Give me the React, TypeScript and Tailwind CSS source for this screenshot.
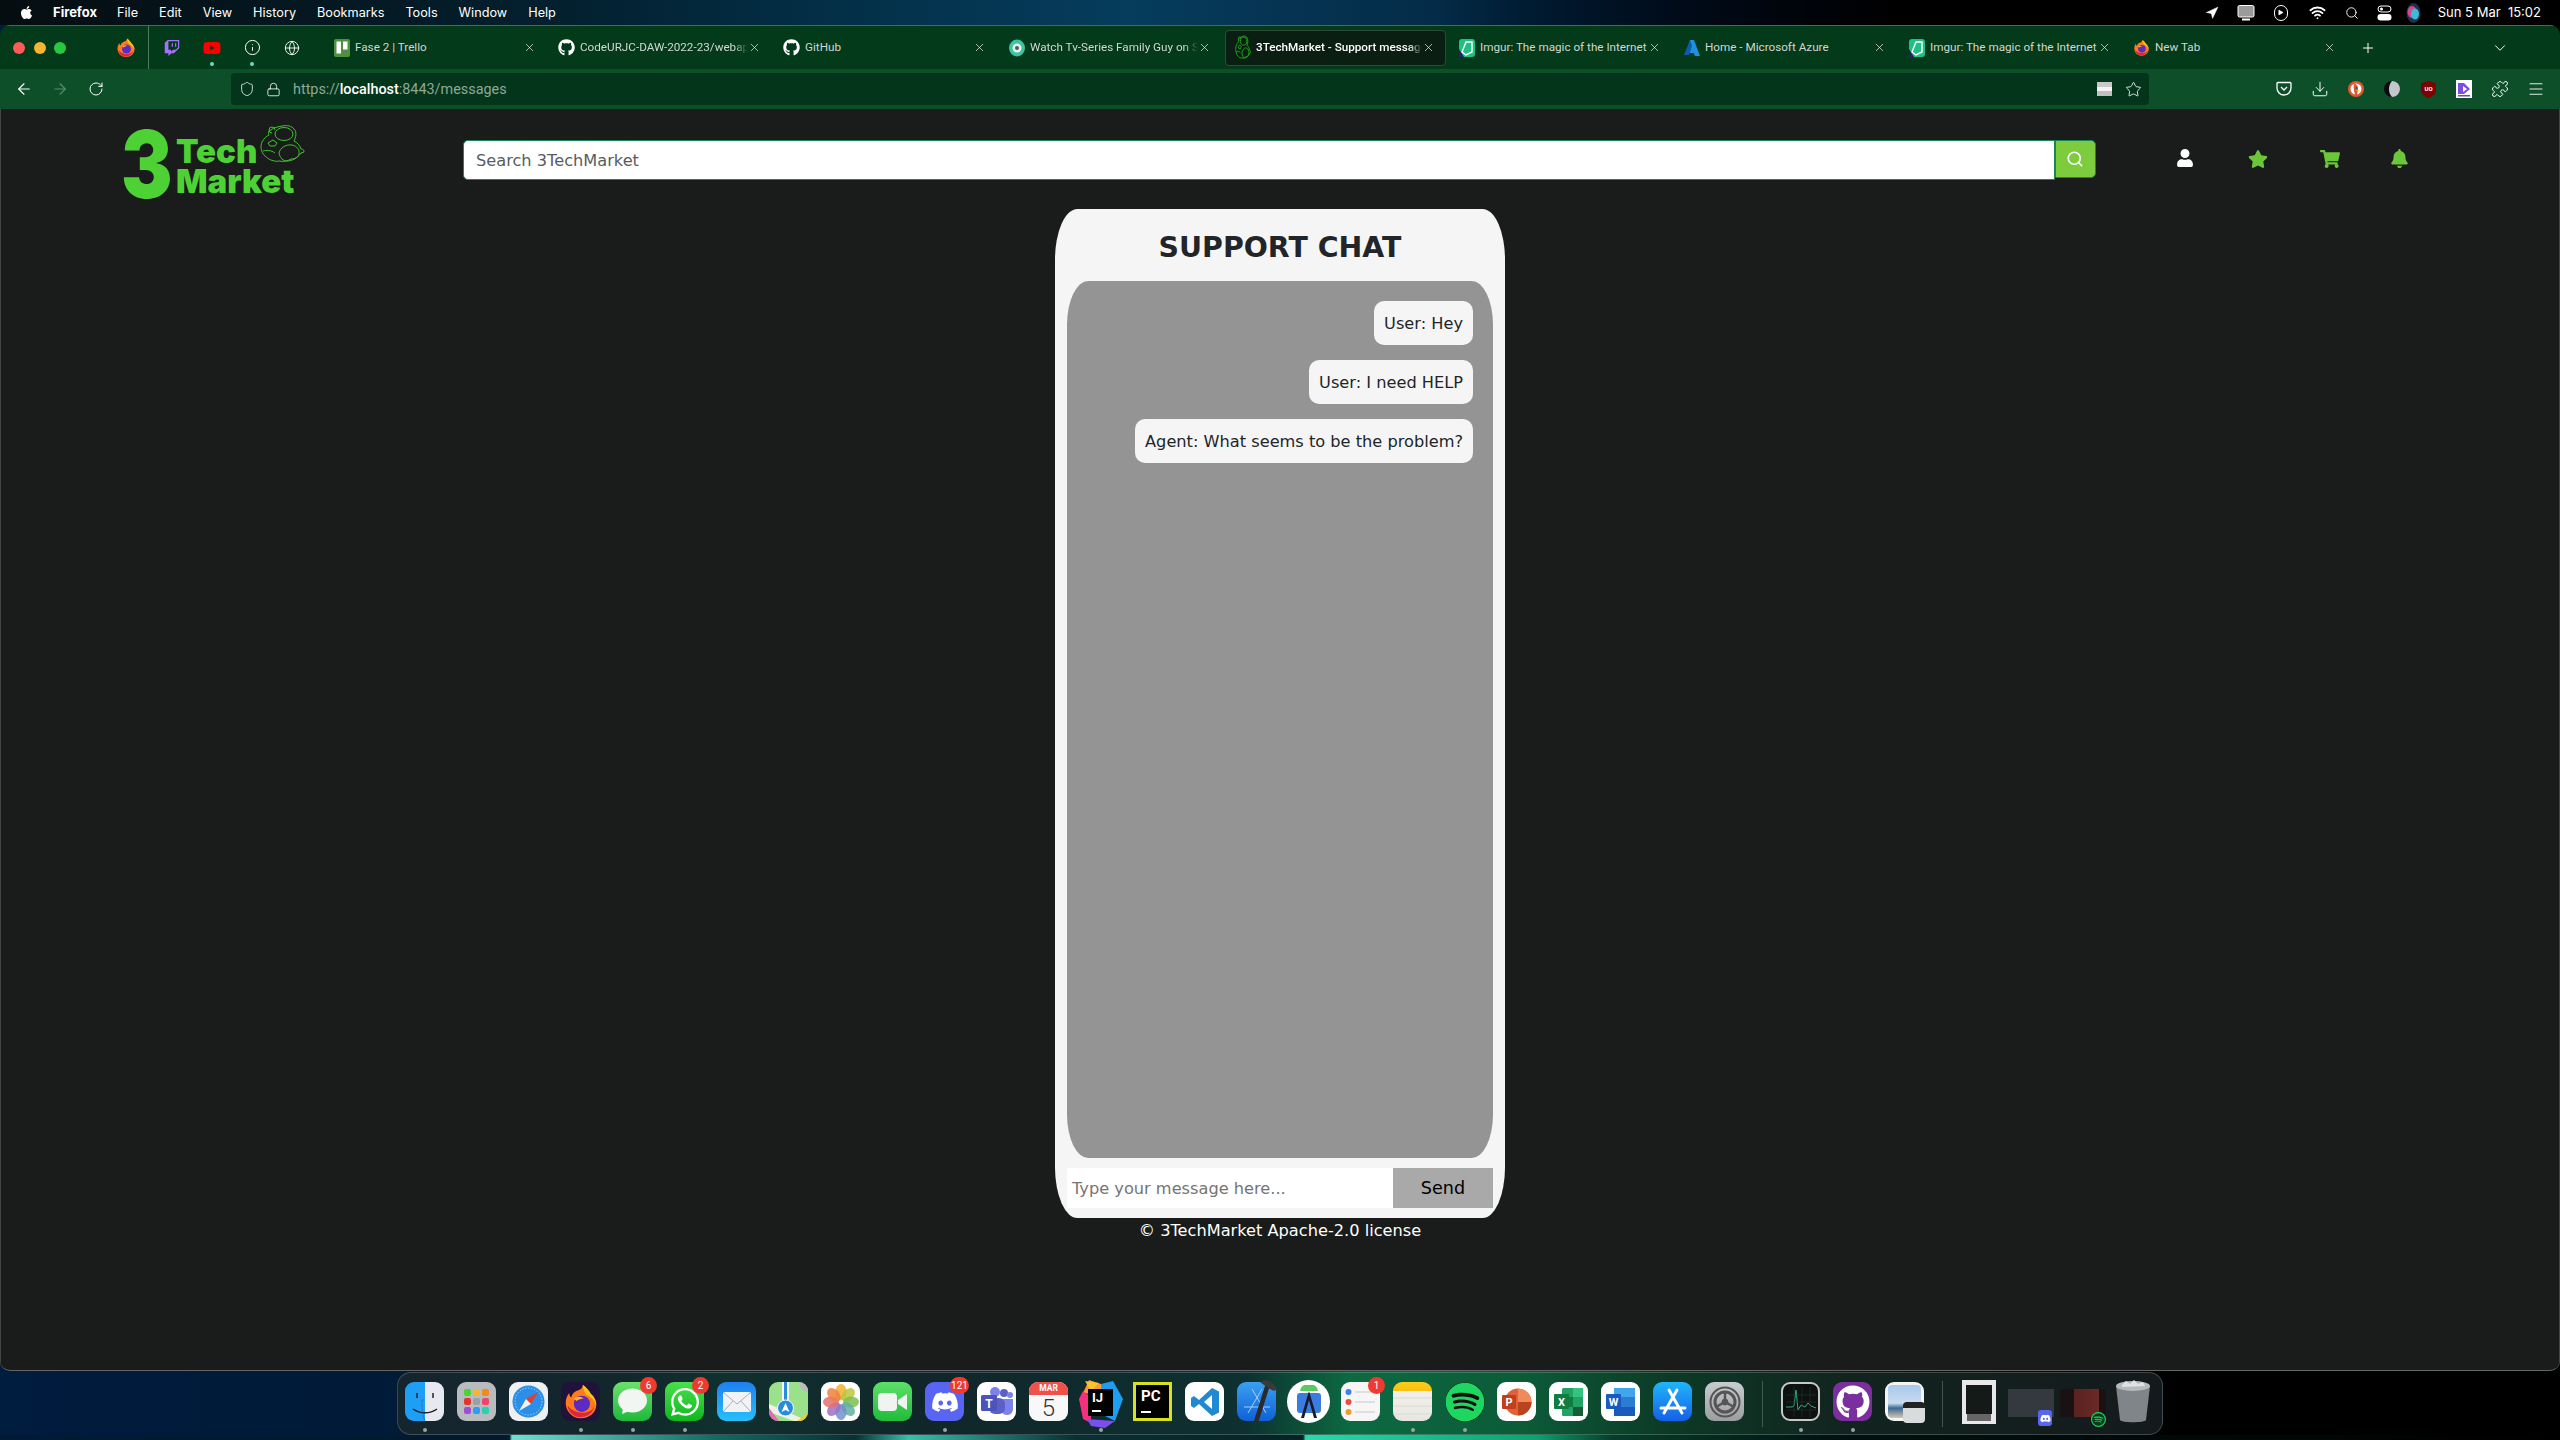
import React from "react";
import { X, Plus, ChevronDown, ArrowLeft, ArrowRight, RotateCw, Star, Download, Menu, Search, Shield, Lock, Puzzle, Play, Wifi, Navigation, Globe, Info } from "lucide-react";
import { FaApple, FaGithub, FaDiscord, FaSpotify, FaWhatsapp, FaTwitch, FaYoutube, FaUser, FaStar, FaShoppingCart, FaBell } from "react-icons/fa";

const sans = "font-['Roboto',sans-serif]";
const deja = "font-['DejaVu_Sans',sans-serif]";

function Firefox({ s = 20 }: { s?: number }) {
  return (
    <svg width={s} height={s} viewBox="0 0 40 40">
      <path d="M20 38C9 38 3 29 3 21c0-5 2-9 4-11 0 3 1 4 2 5 1-4 4-7 8-8 3-1 5-3 5-6 5 3 5 6 6 8 5 3 9 8 9 14 0 9-8 15-17 15z" fill="#ff7a1a" />
      <path d="M22 1c6 4 8 8 9 10 4 3 6 8 6 13-2-6-6-10-11-12-2-3-4-7-4-11z" fill="#ffc21a" />
      <circle cx="21" cy="22" r="9" fill="#5b2bc4" />
      <path d="M5 24c1 8 8 14 16 13 7-1 12-5 14-12-3 5-8 7-14 7-6 0-12-3-16-8z" fill="#e0243c" />
      <path d="M12 16c3-2 8-2 11 0-3 0-6 1-8 3z" fill="#ffb52e" />
    </svg>
  );
}

function ImgurIcon() {
  return (
    <svg width="16" height="18" viewBox="0 0 16 18">
      <rect width="16" height="18" rx="3" fill="#1fbf85" />
      <path d="M7 3h6v10l-6 3-4-3z" fill="none" stroke="#fff" strokeWidth="1.4" />
      <path d="M0 10l5 8H2a2 2 0 0 1-2-2z" fill="#2a1a6e" />
    </svg>
  );
}

function TechFrog({ w, h, color, stroke = 1 }: { w: number; h: number; color: string; stroke?: number }) {
  return (
    <svg width={w} height={h} viewBox="0 0 46 42" fill="none" stroke={color} strokeWidth={stroke} preserveAspectRatio="none">
      <path d="M12 6c3-3 7-3 11-4 5-1 10 0 12 3 3 3 2 8 0 12 4 2 6 5 7 8 2 0 3 1 3 3l-3 1c-2 3-5 6-10 6-3 2-8 3-12 2-4 1-10-1-14-5-4-4-5-9-3-14 2-4 5-6 7-7-1-2-1-4 2-5z" />
      <ellipse cx="25" cy="10" rx="9" ry="6.5" />
      <path d="M16 6a3 3 0 1 0-3 3" />
      <path d="M9 19l5-3 4 3-2 3-5 0z" />
      <path d="M20 29c1-5 7-9 13-8 5 1 8 5 7 9s-7 7-12 7c-4 0-7-3-8-8z" />
      <path d="M4 27c3-1 8-1 12 2" />
    </svg>
  );
}

const tabs: { title: string; icon: React.ReactNode; active?: boolean; fade?: boolean }[] = [
  {
    title: "Fase 2 | Trello",
    icon: (
      <svg width="16" height="18" viewBox="0 0 16 18">
        <rect width="16" height="18" rx="2" fill="#4f9140" />
        <rect x="2.5" y="2.5" width="4.5" height="12" fill="#fff" />
        <rect x="9" y="2.5" width="4.5" height="8" fill="#fff" />
      </svg>
    ),
  },
  { title: "CodeURJC-DAW-2022-23/webapp2", icon: <FaGithub size={17} color="#fff" />, fade: true },
  { title: "GitHub", icon: <FaGithub size={17} color="#fff" /> },
  {
    title: "Watch Tv-Series Family Guy on Stream",
    icon: (
      <svg width="16" height="18" viewBox="0 0 16 18">
        <ellipse cx="8" cy="9" rx="8" ry="8.5" fill="#3fc2a0" />
        <circle cx="8" cy="9" r="4.5" fill="#e6f2ee" />
        <circle cx="8" cy="9" r="2" fill="#46605a" />
      </svg>
    ),
    fade: true,
  },
  { title: "3TechMarket - Support messages", icon: <TechFrog w={16} h={26} color="#1fc01f" stroke={1.6} />, active: true, fade: true },
  { title: "Imgur: The magic of the Internet", icon: <ImgurIcon /> },
  {
    title: "Home - Microsoft Azure",
    icon: (
      <svg width="16" height="18" viewBox="0 0 16 18">
        <path d="M6 1h4l6 16h-5l-1.500-3H4z" fill="#1f8fe0" />
        <path d="M6 1L0 16h5l3-9z" fill="#0b5cad" />
      </svg>
    ),
  },
  { title: "Imgur: The magic of the Internet", icon: <ImgurIcon /> },
  { title: "New Tab", icon: <Firefox s={18} /> },
];

function Dock({ children, dot, badge, badgeW }: { children: React.ReactNode; dot?: boolean; badge?: string; badgeW?: boolean }) {
  return (
    <div className="relative w-[39px] h-[39px] mr-[13px] shrink-0">
      {children}
      {badge && (
        <div className={`absolute -top-[5px] -right-[5px] h-[17px] ${badgeW ? "w-[19px]" : "w-[17px]"} rounded-full bg-[#ee3a30] text-white text-[10px] leading-[17px] text-center ${sans}`}>
          {badge}
        </div>
      )}
      {dot && <div className="absolute -bottom-[11px] left-[17.5px] w-[4px] h-[4px] rounded-full bg-[#9aa3a3]" />}
    </div>
  );
}

function Sq({ className, children }: { className: string; children?: React.ReactNode }) {
  return <div className={`w-[39px] h-[39px] rounded-[9px] overflow-hidden flex items-center justify-center ${className}`}>{children}</div>;
}

export default function App() {
  return (
    <div className={`w-[2560px] h-[1440px] overflow-hidden flex flex-col bg-[linear-gradient(90deg,#001c3e_0%,#001a38_14%,#0b2a36_30%,#0b3a34_50%,#0a6a40_55%,#0a4a2e_62%,#061a18_72%,#000_85%)] ${sans}`}>
      {/* menu bar */}
      <div className="h-[25px] shrink-0 flex items-center text-white text-[12.700px] bg-[linear-gradient(90deg,#060d10_0%,#03202f_22%,#03314a_34%,#063c5c_44%,#042c48_56%,#001a30_60%,#000a18_66%,#000_74%)] font-['Inter',sans-serif]">
        <FaApple size={15} className="ml-[19px] mr-[19px]" />
        <span className="font-bold text-[13px] mr-[20px]">Firefox</span>
        <span className="mr-[21px]">File</span>
        <span className="mr-[21px]">Edit</span>
        <span className="mr-[21px]">View</span>
        <span className="mr-[21px]">History</span>
        <span className="mr-[21px]">Bookmarks</span>
        <span className="mr-[21px]">Tools</span>
        <span className="mr-[21px]">Window</span>
        <span>Help</span>
        <div className="ml-auto flex items-center">
          <Navigation size={14} fill="#fff" strokeWidth={1} className="mr-[18px]" />
          <svg width="18" height="16" viewBox="0 0 18 16" className="mr-[19px]"><rect x="1" y="0.500" width="16" height="11.500" rx="1.500" fill="#9b9b9b" stroke="#fff" /><rect x="5" y="13.500" width="8" height="2" fill="#fff" /></svg>
          <div className="w-[14px] h-[16px] rounded-full border border-white flex items-center justify-center mr-[21px]"><Play size={7} fill="#fff" strokeWidth={0} /></div>
          <Wifi size={17} strokeWidth={2.6} className="mr-[19px]" />
          <Search size={14} strokeWidth={1.6} className="mr-[18px]" />
          <svg width="15" height="16" viewBox="0 0 15 16" className="mr-[14px]"><rect x="1" y="1" width="13" height="6" rx="3" fill="none" stroke="#fff" /><circle cx="4.500" cy="4" r="1.500" fill="#fff" /><rect x="0.500" y="9" width="14" height="6.500" rx="3.200" fill="#fff" /></svg>
          <svg width="15" height="20" viewBox="0 0 15 20" className="mr-[17px]"><ellipse cx="7.500" cy="10" rx="7" ry="10" fill="#26304a" /><ellipse cx="6" cy="9" rx="4.500" ry="6" fill="#d14a8f" /><ellipse cx="9" cy="11" rx="4" ry="5.500" fill="#38bcd8" /></svg>
          <span className="mr-[19px] whitespace-pre text-[13px]">Sun 5 Mar  15:02</span>
        </div>
      </div>

      {/* window */}
      <div className="h-[1346px] shrink-0 flex flex-col rounded-t-[10px] rounded-b-[10px] overflow-hidden border-b border-[#666] bg-[#1a1c1b]">
        {/* tab row */}
        <div className="h-[44px] shrink-0 flex items-center bg-[#033a1a] text-[#cfd8d2] text-[11.700px] border-t border-[#4a6a55]">
          <div className="w-[116px] shrink-0 flex items-center pl-[13px] gap-[8.500px]">
            <div className="w-[12px] h-[12px] rounded-full bg-[#fa5c56]" />
            <div className="w-[12px] h-[12px] rounded-full bg-[#f5b52e]" />
            <div className="w-[12px] h-[12px] rounded-full bg-[#2ac840]" />
          </div>
          <Firefox s={20} />
          <div className="ml-[12px] w-px h-[44px] bg-[#4f7a60]" />
          <div className="ml-[3px] w-[40px] flex justify-center shrink-0">
            <div className="w-[16px] h-[20px] flex items-center justify-center"><FaTwitch size={18} color="#a970ff" /></div>
          </div>
          <div className="w-[40px] flex justify-center shrink-0 relative">
            <FaYoutube size={18} color="#ff0000" />
            <div className="absolute left-[18px] top-[23px] w-[4px] h-[4px] rounded-full bg-[#5fe0c0]" />
          </div>
          <div className="w-[40px] flex justify-center shrink-0 relative">
            <Info size={17} color="#fff" strokeWidth={1.4} />
            <div className="absolute left-[18px] top-[23px] w-[4px] h-[4px] rounded-full bg-[#5fe0c0]" />
          </div>
          <div className="w-[40px] flex justify-center shrink-0">
            <Globe size={16} color="#fff" strokeWidth={1.4} />
          </div>
          <div className="w-[13px] shrink-0" />
          {tabs.map((t, i) => (
            <div key={i} className="w-[225px] shrink-0 pr-[4px]">
              <div className={`h-[36px] flex items-center pl-[8px] pr-[10px] rounded-[4px] ${t.active ? "bg-[#0a1f12] border border-[#2d4a38] text-white" : ""}`}>
                <div className="w-[17px] shrink-0 flex justify-center">{t.icon}</div>
                <div className={`ml-[5px] w-[174px] pt-[1px] whitespace-nowrap overflow-hidden ${t.fade ? "[mask-image:linear-gradient(90deg,#000_92%,transparent)]" : ""} ${t.active ? "font-medium" : ""}`}>{t.title}</div>
                <X size={13} strokeWidth={1.2} color="#fff" className="ml-auto shrink-0" />
              </div>
            </div>
          ))}
          <div className="w-[36px] flex justify-center shrink-0"><Plus size={16} color="#fff" strokeWidth={1.5} /></div>
          <div className="ml-[96px] w-[36px] flex justify-center shrink-0"><ChevronDown size={18} color="#fff" strokeWidth={1.3} /></div>
        </div>

        {/* toolbar */}
        <div className="h-[40px] shrink-0 flex items-center bg-[#0c4f28]">
          <div className="w-[48px] flex justify-center"><ArrowLeft size={18} color="#fff" strokeWidth={1.5} /></div>
          <div className="w-[24px] flex justify-center"><ArrowRight size={18} color="#5f8a6f" strokeWidth={1.5} /></div>
          <div className="w-[48px] flex justify-center"><RotateCw size={16} color="#fff" strokeWidth={1.5} /></div>
          <div className="ml-[111px] w-[1918px] shrink-0 h-[32px] rounded-[4px] bg-[#03351a] flex items-center text-[14.400px] text-[#8fa898]">
            <Shield size={16} color="#fff" strokeWidth={1.2} className="ml-[8px]" />
            <Lock size={15} color="#fff" strokeWidth={1.3} className="ml-[11px]" />
            <span className="ml-[12px] pt-[2px]">https://<span className="text-white font-medium">localhost</span>:8443/messages</span>
            <div className="ml-auto w-[15px] h-[14px] flex flex-col">
              <div className="h-[5px] bg-[#c8c8c8]" />
              <div className="h-[4px] bg-[#f4f4f4]" />
              <div className="h-[5px] bg-[#c0c0c0]" />
            </div>
            <Star size={17} color="#fff" strokeWidth={1.2} className="ml-[13px] mr-[7px]" />
          </div>
          <div className="flex-1 flex items-center pl-[117px]">
            <div className="w-[36px] flex justify-center">
              <svg width="16" height="16" viewBox="0 0 16 16" fill="none" stroke="#fff" strokeWidth="1.300"><path d="M2 1.500h12a1 1 0 0 1 1 1V7A7 7 0 0 1 1 7V2.500a1 1 0 0 1 1-1z" /><path d="M5 6l3 3 3-3" /></svg>
            </div>
            <div className="w-[36px] flex justify-center"><Download size={18} color="#fff" strokeWidth={1.3} /></div>
            <div className="w-[36px] flex justify-center">
              <svg width="16" height="18" viewBox="0 0 16 16"><circle cx="8" cy="8" r="8" fill="#de5833" /><circle cx="8" cy="8" r="5.500" fill="#fff" /><path d="M6 3c3 0 4 2 4 5 0 3-1 5-1 6H7c0-2-2-5-1-11z" fill="#de5833" /><circle cx="8.500" cy="7" r="1" fill="#2d4f8e" /><path d="M8 9h4l-2 1.500z" fill="#fdd20a" /></svg>
            </div>
            <div className="w-[36px] flex justify-center">
              <svg width="16" height="18" viewBox="0 0 16 16"><circle cx="8" cy="8" r="8" fill="#0c0c10" /><path d="M8 0a8 8 0 0 1 0 16c-2-2-3-5-3-8s1-6 3-8z" fill="#c4c8cc" /></svg>
            </div>
            <div className="w-[36px] flex justify-center">
              <svg width="15" height="17" viewBox="0 0 15 17"><path d="M7.500 0L15 2.500V9c0 4-4 7-7.500 8C4 16 0 13 0 9V2.500z" fill="#800000" /><text x="7.500" y="10" textAnchor="middle" fontSize="6" fontWeight="700" fill="#fff" fontFamily="Roboto">UO</text></svg>
            </div>
            <div className="w-[36px] flex justify-center">
              <svg width="16" height="18" viewBox="0 0 16 18"><rect width="16" height="18" fill="#fff" /><path d="M2 3h6l6 6-6 5H2z" fill="#7a4fe0" /><path d="M7 6l4 3-4 3z" fill="#fff" /><rect x="2" y="15" width="12" height="1.500" fill="#5a4fa0" /></svg>
            </div>
            <div className="w-[36px] flex justify-center"><Puzzle size={18} color="#fff" strokeWidth={1.3} /></div>
            <div className="w-[36px] flex justify-center"><Menu size={18} color="#fff" strokeWidth={1.2} /></div>
          </div>
        </div>

        {/* page */}
        <div className="flex-1 flex flex-col items-center border-x border-[#444]">
          <div className="w-full h-[100px] shrink-0 flex items-start">
            <div className="relative ml-[121px] w-[181px] h-[100px] shrink-0 text-[#4dd135] font-['Inter',sans-serif] font-black">
              <span className="absolute left-[-1px] top-[0px] text-[94px] leading-[110px] [transform:scaleX(.82)] origin-left">3</span>
              <span className="absolute left-[54px] top-[22px] text-[33px] leading-[40px]">Tech</span>
              <span className="absolute left-[54px] top-[53px] text-[33px] leading-[38px]">Market</span>
              <div className="absolute left-[137px] top-[15px]"><TechFrog w={46} h={42} color="#40c42e" /></div>
            </div>
            <div className="ml-[160px] mt-[31px] w-[1592px] h-[40px] bg-white border border-[#198754] rounded-l-[5px] flex items-center pl-[12px] pt-[2px] text-[16.200px] text-[#595c5f] font-['DejaVu_Sans',sans-serif]">Search 3TechMarket</div>
            <div className="mt-[31px] w-[41px] h-[38px] pr-[2px] bg-[#7ccc3e] border border-[#198754] rounded-r-[5px] flex items-center justify-center"><Search size={18} color="#fff" strokeWidth={2.2} /></div>
            <div className="ml-[78px] mt-[40px] w-[22px] flex justify-center"><FaUser size={18} color="#fff" /></div>
            <div className="ml-[51px] mt-[40px] w-[22px] flex justify-center"><FaStar size={20} color="#6cc63a" /></div>
            <div className="ml-[50px] mt-[40px] w-[22px] flex justify-center"><FaShoppingCart size={20} color="#6cc63a" /></div>
            <div className="ml-[47px] mt-[40px] w-[22px] flex justify-center"><FaBell size={19} color="#6cc63a" /></div>
          </div>

          <div className={`w-[450px] h-[1009px] shrink-0 rounded-[5%] bg-[#f5f5f5] flex flex-col px-[12px] ${deja}`}>
            <h1 className="h-[72px] pt-[6px] shrink-0 flex items-center justify-center text-[28.400px] font-bold text-[#212529]">SUPPORT CHAT</h1>
            <div className="w-[426px] h-[877px] shrink-0 rounded-[5%] bg-[#949494] pt-[20px] pr-[20px] flex flex-col items-end gap-[15px] text-[16.200px] text-[#212529]">
              <div className="h-[44px] px-[10px] pt-[2px] flex items-center bg-[#f5f5f5] rounded-[10px]">User: Hey</div>
              <div className="h-[44px] px-[10px] pt-[2px] flex items-center bg-[#f5f5f5] rounded-[10px]">User: I need HELP</div>
              <div className="h-[44px] px-[10px] pt-[2px] flex items-center bg-[#f5f5f5] rounded-[10px]">Agent: What seems to be the problem?</div>
            </div>
            <div className="mt-[10px] h-[40px] shrink-0 flex">
              <div className="flex-1 bg-white flex items-center pl-[5px] pt-[2px] text-[16.200px] text-[#757575]">Type your message here...</div>
              <div className="w-[100px] bg-[#a9a9a9] flex items-center justify-center pt-[1px] text-[17.600px] text-black">Send</div>
            </div>
          </div>
          <div className={`mt-[1px] text-[16.200px] leading-[24px] text-white ${deja}`}>© 3TechMarket Apache-2.0 license</div>
        </div>
      </div>

      {/* dock */}
      <div className="mt-[1px] ml-[397px] w-[1766px] h-[63px] shrink-0 rounded-[14px] border border-[#ffffff30] bg-[linear-gradient(90deg,#14252e_0%,#12262c_12%,#10302e_18%,#10262a_30%,#0e3030_48%,#0c6a42_54%,#0c5a38_64%,#0c3a26_72%,#12241f_82%,#141a1c_100%)] flex pl-[7px] pt-[9px] items-start">
        <Dock dot>
          <Sq className="bg-[linear-gradient(90deg,#1e9ff5_0%,#1e9ff5_52%,#e6eaf0_52%)]">
            <svg width="39" height="39" viewBox="0 0 39 39" fill="none" stroke="#222" strokeWidth="1.500"><path d="M12 11v5M28 11v5M8 27c7 5 17 5 24 0" /><path d="M19 18h-2c0 6 0 14 3 21" stroke="#1a6ab0" strokeWidth=".6" /></svg>
          </Sq>
        </Dock>
        <Dock>
          <Sq className="bg-[#b9bcbe]">
            <div className="grid grid-cols-3 gap-[2px]">
              {["bg-[#4cd137]", "bg-[#f5b52e]", "bg-[#f08a1d]", "bg-[#e6332a]", "bg-[#9aa0a6]", "bg-[#f0446a]", "bg-[#a04fd0]", "bg-[#2a9df4]", "bg-[#2ad0b0]"].map((c) => (
                <div key={c} className={`w-[7px] h-[7px] rounded-[2px] ${c}`} />
              ))}
            </div>
          </Sq>
        </Dock>
        <Dock>
          <Sq className="bg-[#eef0f2]">
            <svg width="39" height="39" viewBox="0 0 39 39"><circle cx="19.500" cy="19.500" r="16" fill="#2b8ee8" /><circle cx="19.500" cy="19.500" r="13.500" fill="none" stroke="#cfe6fa" strokeWidth="1" strokeDasharray="1 2" /><path d="M29 10l-12 7 5 5z" fill="#ea3b30" /><path d="M10 29l12-7-5-5z" fill="#f2f2f2" /></svg>
          </Sq>
        </Dock>
        <Dock dot>
          <Sq className="bg-[#20123a]"><Firefox s={36} /></Sq>
        </Dock>
        <Dock dot badge="6">
          <Sq className="bg-[linear-gradient(180deg,#6ce06c,#1fb83c)]">
            <svg width="39" height="39" viewBox="0 0 39 39"><ellipse cx="19.500" cy="18.500" rx="14.500" ry="12" fill="#f2f6f2" /><path d="M10 26l-1 6 7-3z" fill="#f2f6f2" /></svg>
          </Sq>
        </Dock>
        <Dock dot badge="2">
          <Sq className="bg-[linear-gradient(180deg,#4be04b,#0eb81e)]"><FaWhatsapp size={32} color="#fff" /></Sq>
        </Dock>
        <Dock>
          <Sq className="bg-[linear-gradient(180deg,#1f7ff0,#25c0fa)]">
            <svg width="28" height="20" viewBox="0 0 28 20"><rect width="28" height="20" rx="2" fill="#f0f2f5" /><path d="M1 1l13 11L27 1M1 19l9-10M27 19l-9-10" fill="none" stroke="#a8b0ba" strokeWidth="1" /></svg>
          </Sq>
        </Dock>
        <Dock>
          <Sq className="bg-[#9be08a]">
            <svg width="39" height="39" viewBox="0 0 39 39"><path d="M0 22l39 17H25L0 30z" fill="#f0f0e8" /><path d="M0 26l10 13H0z" fill="#e66ab0" /><rect x="13" y="0" width="7" height="26" fill="#f4f4f4" /><rect x="15" y="0" width="3" height="22" fill="#2a8ae0" /><path d="M30 0a10 10 0 0 0 9 10V0z" fill="#b8bcc0" /><path d="M28 39l11-8v8z" fill="#f5c92e" /><circle cx="16.500" cy="26" r="8" fill="#2a8ae0" stroke="#fff" /><path d="M16.500 21l4 9-4-2-4 2z" fill="#fff" /></svg>
          </Sq>
        </Dock>
        <Dock>
          <Sq className="bg-white">
            <svg width="36" height="36" viewBox="-18 -18 36 36">
              {["#f0b030", "#b8c840", "#7cc050", "#60b0a0", "#7090d0", "#a070c0", "#e07070", "#f08040"].map((c, i) => (
                <ellipse key={c} cx="0" cy="-10" rx="5.500" ry="8" fill={c} opacity=".85" transform={`rotate(${i * 45})`} />
              ))}
            </svg>
          </Sq>
        </Dock>
        <Dock>
          <Sq className="bg-[linear-gradient(180deg,#5de068,#20bc3c)]">
            <svg width="30" height="20" viewBox="0 0 30 20"><rect y="1" width="19" height="18" rx="4" fill="#f0f4f0" /><path d="M20 8l9-6v16l-9-6z" fill="#f0f4f0" /></svg>
          </Sq>
        </Dock>
        <Dock dot badge="121" badgeW>
          <Sq className="bg-[#5865f2]"><FaDiscord size={28} color="#fff" /></Sq>
        </Dock>
        <Dock>
          <Sq className="bg-white">
            <svg width="34" height="30" viewBox="0 0 34 30"><circle cx="24" cy="6" r="4" fill="#5b5fc7" /><circle cx="30" cy="8" r="3" fill="#7b83eb" /><path d="M17 12h16v9a6 6 0 0 1-12 2z" fill="#7b83eb" /><circle cx="15" cy="5" r="5" fill="#7b83eb" /><rect x="9" y="11" width="16" height="16" rx="6" fill="#5b5fc7" /><rect x="1" y="8" width="16" height="16" rx="1.500" fill="#4b53bc" /><text x="9" y="21" textAnchor="middle" fontSize="12" fontWeight="700" fill="#fff" fontFamily="Roboto">T</text></svg>
          </Sq>
        </Dock>
        <Dock>
          <Sq className="bg-[#f8f8f8] flex-col justify-start">
            <div className={`w-full h-[13px] bg-[#f0504a] text-white text-[8.500px] font-bold leading-[13px] text-center ${sans}`}>MAR</div>
            <div className={`text-[24px] leading-[26px] text-[#333] ${sans} font-light`}>5</div>
          </Sq>
        </Dock>
        <Dock dot>
          <div className="relative w-[44px] h-[49px] -mt-[3px] -ml-[2px]">
            <svg width="44" height="49" viewBox="0 0 44 49" className="absolute inset-0">
              <path d="M4 14L10 1l12 4 4 6-14 4z" fill="#ff9a2e" />
              <path d="M0 20L4 12l8 6 0 26-8-4z" fill="#f5317f" />
              <path d="M22 5l12-3 10 18-8 22-12-6z" fill="#1f9df0" />
              <path d="M8 40l28 2-10 7-14-2z" fill="#7a4ff0" />
              <path d="M6 2l14 2-8 8z" fill="#f5c52e" />
            </svg>
            <div className={`absolute left-[9px] top-[10px] w-[25px] h-[27px] bg-black text-white text-[13px] font-bold leading-[15px] pl-[4px] pt-[1px] ${sans}`}>IJ<div className="mt-[5px] w-[9px] h-[2px] bg-white" /></div>
          </div>
        </Dock>
        <Dock>
          <Sq className="!rounded-none bg-black border-[3px] border-[#d8e020] items-start justify-start">
            <div className={`text-white text-[15px] font-bold leading-[16px] pl-[5px] pt-[3px] ${sans}`}>PC<div className="mt-[7px] w-[10px] h-[2px] bg-white" /></div>
          </Sq>
        </Dock>
        <Dock>
          <Sq className="bg-white">
            <svg width="30" height="30" viewBox="0 0 30 30"><path d="M22 1l7 3.500v21L22 29 9 17l-5 4-3-2v-8l3-2 5 4z" fill="#1f8ad2" /><path d="M22 8l-8 7 8 7z" fill="#fff" /></svg>
          </Sq>
        </Dock>
        <Dock>
          <div className="relative w-[39px] h-[39px]">
            <Sq className="bg-[linear-gradient(180deg,#3aa0f0,#1060d8)]">
              <svg width="30" height="30" viewBox="0 0 30 30" fill="none" stroke="#9fd0fa" strokeWidth="1"><path d="M10 2l14 24M20 2L6 26M2 20h26" /></svg>
            </Sq>
            <svg width="26" height="46" viewBox="0 0 26 46" className="absolute left-[15px] -top-[4px]"><path d="M16 6L4 44" stroke="#2a2a2a" strokeWidth="4.500" /><path d="M8 4c6-3 10-2 15 4l2 3-3 2-6-3z" fill="#3a3a3a" /></svg>
          </div>
        </Dock>
        <Dock>
          <div className="relative w-[43px] h-[43px] -ml-[2px] -mt-[2px] rounded-full bg-white flex items-center justify-center">
            <svg width="30" height="34" viewBox="0 0 30 34"><path d="M6 6a9 7 0 0 1 18 0z" fill="#5cc860" /><rect x="3" y="8" width="24" height="20" rx="3" fill="#3a7ce0" /><path d="M15 6L7 33h3l5-18 5 18h3z" fill="#1a1a2a" /></svg>
          </div>
        </Dock>
        <Dock badge="1">
          <Sq className="bg-[#f6f6f6]">
            <svg width="39" height="39" viewBox="0 0 39 39"><circle cx="7.500" cy="10" r="3" fill="#3a80f0" /><circle cx="7.500" cy="20" r="3" fill="#ee4a40" /><circle cx="7.500" cy="30" r="3" fill="#f09a30" /><path d="M14 10h20M14 20h20M14 30h20" stroke="#c8c8c8" /></svg>
          </Sq>
        </Dock>
        <Dock dot>
          <Sq className="bg-[linear-gradient(180deg,#fccc1c_0%,#fcc010_23%,#f2f0ea_24%,#e8e6e0_100%)]">
            <svg width="39" height="39" viewBox="0 0 39 39"><path d="M0 16h39M0 24h39M0 32h39" stroke="#dcdad4" /></svg>
          </Sq>
        </Dock>
        <Dock dot>
          <div className="w-[40px] h-[40px] rounded-full bg-[#1ed760] flex items-center justify-center"><FaSpotify size={40} color="#1ed760" className="bg-[#111] rounded-full" /></div>
        </Dock>
        <Dock>
          <Sq className="bg-white">
            <svg width="31" height="28" viewBox="0 0 31 28"><circle cx="17" cy="14" r="13.500" fill="#e0603a" /><path d="M17 14V.500a13.500 13.500 0 0 1 13.500 13.500z" fill="#f08a5a" /><path d="M17 14h13.500A13.500 13.500 0 0 1 17 27.500z" fill="#b8431f" /><rect x="1" y="7" width="14" height="14" rx="1" fill="#c0401c" /><text x="8" y="18" textAnchor="middle" fontSize="11" fontWeight="700" fill="#fff" fontFamily="Roboto">P</text></svg>
          </Sq>
        </Dock>
        <Dock>
          <Sq className="bg-white">
            <svg width="31" height="30" viewBox="0 0 31 30"><rect x="9" y="1" width="21" height="28" rx="1.500" fill="#21a366" /><rect x="20" y="1" width="10" height="9" fill="#33c481" /><rect x="9" y="10" width="11" height="10" fill="#107c41" /><rect x="20" y="20" width="10" height="9" fill="#185c37" /><rect x="1" y="7" width="15" height="15" rx="1" fill="#107c41" /><text x="8.500" y="19" textAnchor="middle" fontSize="11" fontWeight="700" fill="#fff" fontFamily="Roboto">X</text></svg>
          </Sq>
        </Dock>
        <Dock>
          <Sq className="bg-white">
            <svg width="31" height="30" viewBox="0 0 31 30"><rect x="9" y="1" width="21" height="28" rx="1.500" fill="#2b7cd3" /><rect x="9" y="1" width="21" height="9" fill="#41a5ee" /><rect x="9" y="20" width="21" height="9" fill="#185abd" /><rect x="1" y="7" width="15" height="15" rx="1" fill="#185abd" /><text x="8.500" y="19" textAnchor="middle" fontSize="11" fontWeight="700" fill="#fff" fontFamily="Roboto">W</text></svg>
          </Sq>
        </Dock>
        <Dock>
          <Sq className="bg-[linear-gradient(180deg,#1fb6fa,#1560e8)]">
            <svg width="30" height="30" viewBox="0 0 30 30" fill="none" stroke="#fff" strokeWidth="3" strokeLinecap="round"><path d="M19 3L6 26M11 3l13 23M3 21h24" /></svg>
          </Sq>
        </Dock>
        <Dock>
          <Sq className="bg-[linear-gradient(180deg,#c8ccce,#9a9ea0)]">
            <svg width="32" height="32" viewBox="0 0 32 32" fill="none" stroke="#555"><circle cx="16" cy="16" r="14.500" strokeWidth="2" /><circle cx="16" cy="16" r="10" strokeWidth="3" /><circle cx="16" cy="16" r="3" fill="#555" /><path d="M16 6v7M7 21l7-4M25 21l-7-4" strokeWidth="2.500" /></svg>
          </Sq>
        </Dock>
        <div className="w-px h-[46px] -mt-[1px] ml-[5px] bg-[#ffffff38] shrink-0" />
        <div className="w-[18px] shrink-0" />
        <Dock dot>
          <Sq className="bg-[#0d1110] border-2 border-[#c8c8c8]">
            <svg width="30" height="30" viewBox="0 0 30 30" fill="none" stroke="#2fae7f" strokeWidth="1"><path d="M0 20h6l2-1 2-16 2 20 3-5 4 2 3-4 3 3 5 2" /><path d="M0 8h30M0 15h30M0 23h30M8 0v30M16 0v30M24 0v30" stroke="#1e3a30" strokeWidth=".6" /></svg>
          </Sq>
        </Dock>
        <Dock dot>
          <Sq className="bg-[#7b2f9e]"><FaGithub size={34} color="#fff" /></Sq>
        </Dock>
        <Dock>
          <div className="relative w-[39px] h-[39px]">
            <Sq className="bg-[#f4f4f4] p-[3px]">
              <div className="w-full h-full rounded-[4px] bg-[linear-gradient(180deg,#a8c8ec_0%,#c8dcf0_55%,#3a6a90_70%,#d8c8b0_100%)]" />
            </Sq>
            <div className="absolute left-[18px] top-[20px] w-[22px] h-[21px] rounded-[4px] bg-[#d8dcdc] border-t-[6px] border-[#222]" />
          </div>
        </Dock>
        <div className="w-px h-[46px] -mt-[1px] ml-[5px] bg-[#ffffff38] shrink-0" />
        <div className="w-[19px] shrink-0" />
        <div className="relative w-[34px] h-[44px] shrink-0 -mt-[2px] bg-[#e8e8e8]">
          <div className="absolute left-[4px] top-[5px] w-[26px] h-[29px] bg-[#141a18]" />
          <div className="absolute left-[5px] top-[34px] w-[24px] h-[7px] bg-[#666]" />
        </div>
        <div className="relative ml-[12px] w-[46px] h-[28px] mt-[7px] shrink-0 bg-[#33393e]">
          <div className="absolute right-[2px] -bottom-[9px] w-[14px] h-[16px] rounded-[3px] bg-[#5865f2] flex items-center justify-center"><FaDiscord size={11} color="#fff" /></div>
        </div>
        <div className="relative ml-[6px] w-[46px] h-[28px] mt-[7px] shrink-0 bg-[linear-gradient(90deg,#1a1212_30%,#5a2220_30%,#6a2a26_85%,#1a1212_85%)]">
          <div className="absolute right-[0px] -bottom-[10px] w-[15px] h-[15px] rounded-full bg-[#1ed760] flex items-center justify-center"><FaSpotify size={13} color="#0c3a1c" /></div>
        </div>
        <div className="ml-[10px] shrink-0 -mt-[2px]">
          <svg width="34" height="44" viewBox="0 0 34 44"><path d="M0 6l4 34c1 3 25 3 26 0l4-34z" fill="#7f8588" /><ellipse cx="17" cy="6" rx="17" ry="5" fill="#b6babc" /><path d="M6 5l4-4 4 3 4-4 4 4 5-2 2 4-23 1z" fill="#dfe1e2" /></svg>
        </div>
      </div>

      {/* wallpaper strip below the dock */}
      <div className="h-[6px] shrink-0 bg-[linear-gradient(90deg,#001a36_0%,#021a2c_19.900%,#6fe0d0_20%,#0f6b62_28%,#083033_33.400%,#35c0aa_35.500%,#083033_42%,#062226_50.900%,#2ad8b0_51%,#0aa36f_60%,#063d2a_63%,#001010_72%,#000_100%)]" />
    </div>
  );
}
